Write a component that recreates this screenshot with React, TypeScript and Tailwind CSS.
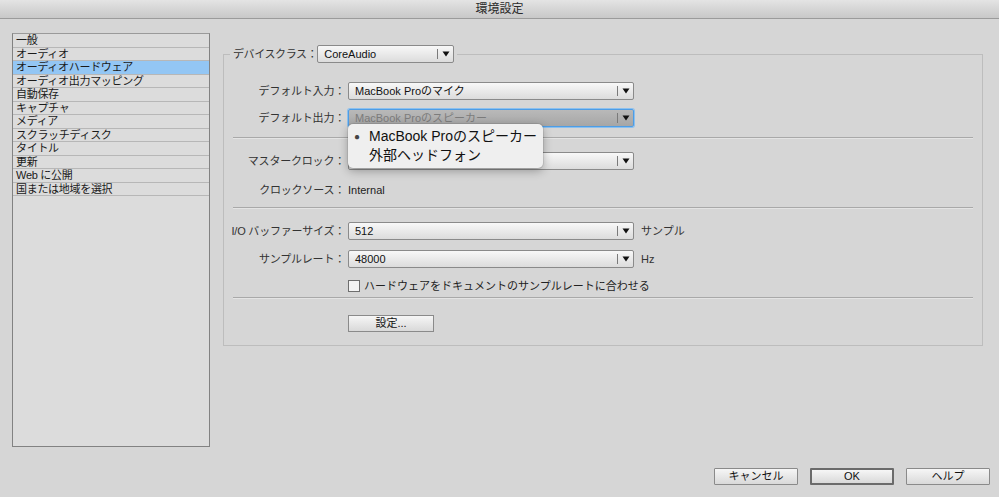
import React from 'react';

const FONT = '"Liberation Sans", "Noto Sans CJK JP", sans-serif';

const categories = [
  '一般',
  'オーディオ',
  'オーディオハードウェア',
  'オーディオ出力マッピング',
  '自動保存',
  'キャプチャ',
  'メディア',
  'スクラッチディスク',
  'タイトル',
  '更新',
  'Web に公開',
  '国または地域を選択',
];

// ▼ の矢印
const Arrow = () => (
  <svg width="8" height="6" viewBox="0 0 8 6">
    <path d="M0.5 0.5 H7.5 L4 5.5 Z" fill="#111" />
  </svg>
);

type SelectProps = {
  value: string;
  width: string;
  focused?: boolean;
};

// ドロップダウン
const Select = ({ value, width, focused }: SelectProps) => (
  <div
    className={
      focused
        ? `flex h-[18px] items-stretch rounded-[2px] border border-[#4d9de6] bg-linear-to-b from-[#b9b9b9] to-[#a6a6a6] shadow-[0_0_0_1px_#8cc0ee] ${width}`
        : `flex h-[18px] items-stretch rounded-[2px] border border-[#8a8a8a] bg-linear-to-b from-[#f8f8f8] to-[#dcdcdc] ${width}`
    }
  >
    <span
      className={
        focused
          ? 'flex-1 truncate pl-[6px] text-[11px] leading-[16px] text-[#7c7c7c]'
          : 'flex-1 truncate pl-[6px] text-[11px] leading-[16px] text-[#111]'
      }
    >
      {value}
    </span>
    <span className="my-[3px] w-px bg-[#7a7a7a]" />
    <span className="flex w-[15px] items-center justify-center">
      <Arrow />
    </span>
  </div>
);

const Label = ({ children }: { children: React.ReactNode }) => (
  <span className="flex w-[115px] shrink-0 justify-end whitespace-nowrap pr-[3px] text-[11px] tracking-[-0.2px] text-[#333]">
    {children}
  </span>
);

const Separator = ({ className }: { className: string }) => (
  <div className={`h-[2px] border-t border-b border-t-[#a9a9a9] border-b-[#e4e4e4] ${className}`} />
);

const Button = ({ children, strong }: { children: React.ReactNode; strong?: boolean }) => (
  <button
    className={
      strong
        ? 'h-[17px] w-[84px] rounded-[1px] border-2 border-[#6b6b6b] bg-linear-to-b from-[#f6f6f6] to-[#d9d9d9] text-[11px] leading-[13px] text-[#111]'
        : 'h-[17px] w-[84px] rounded-[1px] border border-[#8a8a8a] bg-linear-to-b from-[#f6f6f6] to-[#d9d9d9] text-[11px] leading-[15px] text-[#111]'
    }
  >
    {children}
  </button>
);

export default function App() {
  return (
    <div className="flex h-[497px] w-[999px] flex-col bg-[#d6d6d6]" style={{ fontFamily: FONT }}>
      {/* タイトルバー */}
      <div className="flex h-[19px] shrink-0 items-center justify-center border-b border-[#9b9b9b] bg-linear-to-b from-[#e4e4e4] to-[#c8c8c8] text-[12px] text-[#2b2b2b]">
        環境設定
      </div>

      <div className="flex items-start pl-[12px] pt-[14px]">
        {/* カテゴリ一覧 */}
        <div className="h-[414px] w-[198px] shrink-0 border border-[#828282] border-t-[#9a9a9a] bg-[#dcdcdc]">
          {categories.map((c, i) => (
            <div
              key={c}
              className={
                i === 2
                  ? 'h-[13.5px] border-b border-[#b7b7b7] bg-[#93c6f4] pl-[3px] text-[11px] leading-[13px] tracking-[-0.3px] text-[#1a1a1a]'
                  : 'h-[13.5px] border-b border-[#b7b7b7] pl-[3px] text-[11px] leading-[13px] tracking-[-0.3px] text-[#1a1a1a]'
              }
            >
              {c}
            </div>
          ))}
        </div>

        {/* オーディオハードウェア設定 */}
        <fieldset className="ml-[13px] mt-[12px] w-[760px] border border-[#bdbdbd] px-[9px] pb-[13px] pt-[19px]">
          <legend className="-ml-[3px] flex items-center px-[3px]">
            <span className="whitespace-nowrap text-[11px] tracking-[-0.4px] text-[#333]">デバイスクラス：</span>
            <Select value="CoreAudio" width="w-[137px]" />
          </legend>

          <div className="flex items-center">
            <Label>デフォルト入力：</Label>
            <Select value="MacBook Proのマイク" width="w-[286px]" />
          </div>

          <div className="mt-[9px] flex items-center">
            <Label>デフォルト出力：</Label>
            <div className="relative">
              <Select value="MacBook Proのスピーカー" width="w-[286px]" focused />
              {/* ポップアップメニュー */}
              <div className="absolute left-0 top-[15px] z-10 flex h-[44px] w-[195px] flex-col justify-center rounded-[5px] bg-[#efefef] shadow-[0_3px_10px_rgba(0,0,0,0.3),0_0_0_1px_rgba(0,0,0,0.08)]">
                <div className="flex h-[19px] items-center text-[14px] text-[#111]">
                  <span className="w-[21px] pl-[6px] text-[10px] text-[#444]">●</span>
                  <span>MacBook Proのスピーカー</span>
                </div>
                <div className="flex h-[19px] items-center pl-[21px] text-[14px] text-[#111]">外部ヘッドフォン</div>
              </div>
            </div>
          </div>

          <Separator className="mt-[10px]" />

          <div className="mt-[13px] flex items-center">
            <Label>マスタークロック：</Label>
            <Select value="" width="w-[286px]" />
          </div>

          <div className="mt-[11px] flex h-[18px] items-center">
            <Label>クロックソース：</Label>
            <span className="text-[11px] text-[#222]">Internal</span>
          </div>

          <Separator className="mt-[8px]" />

          <div className="mt-[13px] flex items-center">
            <Label>I/O バッファーサイズ：</Label>
            <Select value="512" width="w-[286px]" />
            <span className="pl-[7px] text-[11px] text-[#333]">サンプル</span>
          </div>

          <div className="mt-[10px] flex items-center">
            <Label>サンプルレート：</Label>
            <Select value="48000" width="w-[286px]" />
            <span className="pl-[7px] text-[11px] text-[#333]">Hz</span>
          </div>

          <div className="mt-[11px] flex h-[14px] items-center pl-[115px]">
            <span className="h-[12px] w-[12px] border border-[#6e6e6e] bg-[#f4f4f4]" />
            <span className="pl-[4px] text-[11px] text-[#222]">ハードウェアをドキュメントのサンプルレートに合わせる</span>
          </div>

          <Separator className="mt-[4px]" />

          <div className="mt-[16px] flex pl-[115px]">
            <button className="h-[17px] w-[86px] border border-[#8a8a8a] bg-linear-to-b from-[#f6f6f6] to-[#d9d9d9] text-[11px] leading-[15px] text-[#111]">
              設定...
            </button>
          </div>
        </fieldset>
      </div>

      {/* 下部ボタン */}
      <div className="mt-auto flex justify-end gap-[12px] pb-[12px] pr-[9px]">
        <Button>キャンセル</Button>
        <Button strong>OK</Button>
        <Button>ヘルプ</Button>
      </div>
    </div>
  );
}
